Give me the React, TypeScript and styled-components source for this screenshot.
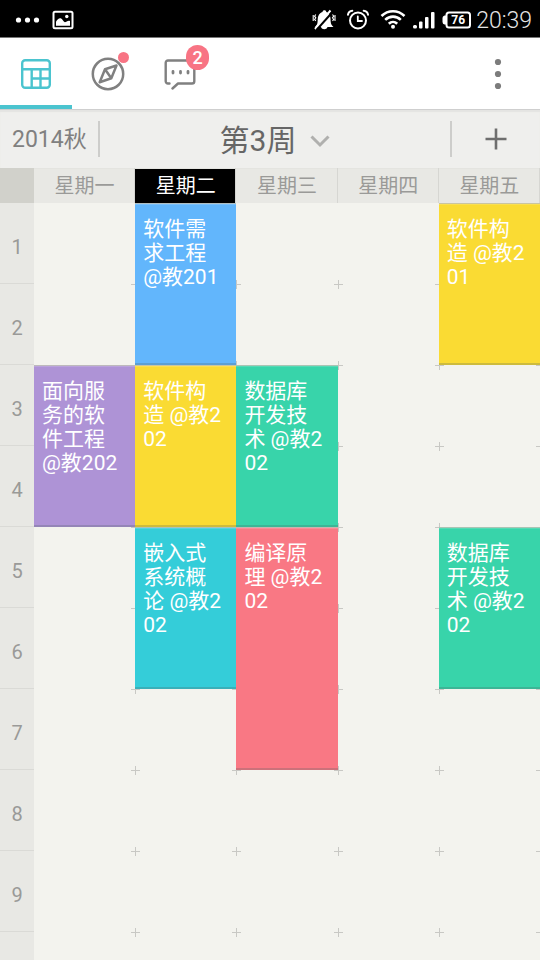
import React from "react";
import styled, { createGlobalStyle } from "styled-components";

const Global = createGlobalStyle`
  *, *::before, *::after { box-sizing: border-box; }
  body {
    margin: 0;
    background: #f3f3ee;
    font-family: Roboto, "Noto Sans CJK SC", sans-serif;
    font-weight: 400;
  }
  button { font: inherit; color: inherit; border: 0; padding: 0; background: none; cursor: pointer; }
  svg { display: block; flex: none; }
`;

const ROW = 81;

const Screen = styled.div`
  height: 100vh;
  display: flex;
  flex-direction: column;
  overflow: hidden;
`;

const StatusBar = styled.div`
  display: flex;
  justify-content: space-between;
  align-items: center;
  flex: none;
  height: 38px;
  padding: 2px 8px 0 14px;
  background: #000;
  border-bottom: 1px solid #777;
  color: #e6e6e6;
`;

const StatusGroup = styled.div<{ $gap: number }>`
  display: flex;
  align-items: center;
  gap: ${(p) => p.$gap}px;
`;

const Clock = styled.time`
  margin-left: -7px;
  padding-top: 2px;
  font-size: 23px;
  font-weight: 300;
  line-height: 28px;
`;

const TabBar = styled.nav`
  display: flex;
  flex: none;
  height: 72px;
  background: #fff;
  border-bottom: 1px solid #cfcfcf;
  color: #808080;
`;

const Tab = styled.button<{ $active?: boolean }>`
  position: relative;
  display: flex;
  align-items: center;
  justify-content: center;
  width: 72px;
  color: ${(p) => (p.$active ? "#4bc4cf" : "#808080")};
  box-shadow: ${(p) => (p.$active ? "inset 0 -4px #4bc4cf" : "none")};
`;

const Dot = styled.span`
  position: absolute;
  top: 14px;
  right: 15px;
  width: 11px;
  height: 11px;
  border-radius: 50%;
  background: #f87484;
`;

const Badge = styled.span`
  position: absolute;
  top: 7px;
  right: 7px;
  width: 23px;
  height: 25px;
  border-radius: 12px;
  background: #f87484;
  color: #fff;
  font-size: 18px;
  font-weight: 500;
  line-height: 26px;
  text-align: center;
`;

const MenuButton = styled.button`
  display: flex;
  align-items: center;
  justify-content: center;
  width: 84px;
  margin-left: auto;
`;

const Toolbar = styled.div`
  display: flex;
  align-items: center;
  flex: none;
  height: 58px;
  background: #efefed;
  box-shadow: inset 0 2px 1px #e4e4e2;
  color: #666;
`;

const Term = styled.button`
  width: 100px;
  height: 36px;
  padding: 2px 0 0 12px;
  border-right: 2px solid #cdcdcb;
  color: #808080;
  font-size: 23px;
  line-height: 34px;
  text-align: left;
  white-space: nowrap;
`;

const Week = styled.button`
  display: flex;
  align-items: center;
  justify-content: center;
  gap: 14px;
  flex: 1;
  padding-top: 3px;
  font-size: 30px;
  line-height: 40px;
`;

const AddButton = styled.button`
  display: flex;
  align-items: center;
  justify-content: center;
  width: 90px;
  height: 36px;
  border-left: 2px solid #cdcdcb;
`;

const Scroller = styled.main`
  flex: 1;
  min-height: 0;
  overflow: hidden auto;
  scrollbar-width: none;
`;

const Timetable = styled.table`
  width: 100%;
  table-layout: fixed;
  border-collapse: collapse;
`;

const Corner = styled.td`
  width: 34px;
  padding: 0;
  background: #d1d1cb;
`;

const DayHead = styled.th<{ $today: boolean }>`
  height: 35px;
  padding: 0;
  background: ${(p) => (p.$today ? "#000" : "#e8e8e4")};
  color: ${(p) => (p.$today ? "#fff" : "#9a9a98")};
  box-shadow: inset -1px 0 #d6d6d2, inset 0 1px #e4e4e0;
  font-size: 20px;
  font-weight: 400;
  line-height: 30px;
  text-align: center;
`;

const PeriodHead = styled.th`
  height: ${ROW}px;
  padding: 6px 0 0;
  background: #e8e8e4;
  box-shadow: inset 0 -1px #dadad6;
  color: #9a9a98;
  font-size: 20px;
  font-weight: 400;
  line-height: 24px;
  text-align: center;
`;

const Cell = styled.td<{ $span: number }>`
  position: relative;
  height: ${(p) => p.$span * ROW}px;
  padding: 0;
  vertical-align: top;
`;

/* Small plus mark on the lower right corner of every period. */
const Mark = styled.i<{ $row: number }>`
  position: absolute;
  z-index: 1;
  top: ${(p) => p.$row * ROW - 4}px;
  right: -5px;
  width: 9px;
  height: 9px;
  background:
    linear-gradient(#c8c8c4, #c8c8c4) center / 9px 1px no-repeat,
    linear-gradient(#c8c8c4, #c8c8c4) center / 1px 9px no-repeat;
`;

const Course = styled.div<{ $color: string }>`
  position: relative;
  z-index: 2;
  height: 100%;
  padding: 14px 10px 0 8px;
  background: ${(p) => p.$color};
  box-shadow: inset 0 1px rgba(190, 190, 180, 0.8), inset 0 2px rgba(255, 255, 255, 0.15),
    inset 0 -2px rgba(70, 90, 90, 0.25);
  color: #fff;
  font-size: 21px;
  line-height: 24px;
  word-break: break-all;
`;

const StatusDots = () => (
  <svg width="26" height="20" viewBox="0 0 26 20" fill="#fff">
    <circle cx="4.5" cy="10" r="2.6" />
    <circle cx="13.5" cy="10" r="2.6" />
    <circle cx="22.5" cy="10" r="2.6" />
  </svg>
);

const PictureIcon = () => (
  <svg width="22" height="20" viewBox="0 0 22 20">
    <rect x="1.5" y="1.8" width="19" height="16.4" rx="1.5" fill="none" stroke="#fff" strokeWidth="2" />
    <path d="M4 15.8v-4c1.5-2.8 3.5-4.2 5.2-3.2 1.3.8 2 2.9 3.3 3.5 1.7.3 3-2 5.5-1.2v4.9z" fill="#fff" />
    <circle cx="14.8" cy="6.5" r="1.7" fill="#fff" />
  </svg>
);

const MutedBell = () => (
  <svg width="24" height="22" viewBox="0 0 24 22" fill="none">
    <path d="M3 18C6 15.5 5.500 13 5.800 9.500 6.200 5.500 8.500 3.600 10.500 3c0-2.400 3.800-2.400 3.800 0 2.200.7 4 2.600 4.200 6.500.2 3.500 0 6 3 8.500z" fill="#fff" />
    <path d="M9 18h6.500c-.8 3-5.700 3-6.500 0z" fill="#fff" />
    <path d="M3 20 18.500 1.500" stroke="#fff" strokeWidth="2" />
    <path d="M4.500 21 21 2.500" stroke="#000" strokeWidth="1.900" />
    <path d="M3.800 5.500 2.600 7.200l1.200 1.600-1.200 1.600L3.800 12M1.200 6v6M20.500 5.500l1.200 1.700-1.200 1.600 1.200 1.600-1.200 1.600M23 6v6" stroke="#fff" strokeWidth="1.100" />
  </svg>
);

const AlarmIcon = () => (
  <svg width="22" height="22" viewBox="0 0 22 22" fill="none" stroke="#fff" strokeLinecap="round">
    <circle cx="11" cy="11.5" r="8" strokeWidth="2" />
    <path d="M10.800 7.500V12H15" strokeWidth="1.800" />
    <path d="M1 5.700C1.300 3.300 3 1.900 5.300 1.700M21 5.700c-.3-2.400-2-3.800-4.300-4" strokeWidth="2" />
  </svg>
);

const WifiIcon = () => (
  <svg width="26" height="22" viewBox="0 0 26 22" fill="none" stroke="#fff" strokeWidth="2.6">
    <path d="M1.500 7c6.500-6.400 16.500-6.400 23 0M5.200 10.900c4.400-4.300 11.200-4.300 15.600 0M8.800 14.700c2.400-2.300 6-2.300 8.400 0" />
    <circle cx="13" cy="17.700" r="2" fill="#fff" stroke="none" />
  </svg>
);

const SignalIcon = () => (
  <svg width="24" height="20" viewBox="0 0 24 20" fill="#fff">
    <rect x="1" y="15" width="4" height="3.5" rx="1.5" />
    <rect x="7" y="11.5" width="3.5" height="7" rx="1" />
    <rect x="13" y="7" width="3.5" height="11.5" rx="1" />
    <rect x="19" y="2" width="3.5" height="16.5" rx="1" />
  </svg>
);

const BatteryIcon = () => (
  <svg width="30" height="18" viewBox="0 0 30 18">
    <rect x="4.5" y="1.5" width="23.5" height="15" rx="2.5" fill="none" stroke="#fff" strokeWidth="2" />
    <path d="M4 4.500H2.500Q.5 5 .5 7v4q0 2 2 2.500H4z" fill="#fff" />
    <text x="16.200" y="13" textAnchor="middle" fontSize="12" fontWeight="700" fontFamily="Roboto, sans-serif" fill="#fff">76</text>
  </svg>
);

const TableIcon = () => (
  <svg width="32" height="32" viewBox="0 0 32 32" fill="none" stroke="currentColor" strokeWidth="2.4">
    <rect x="2.2" y="2.2" width="27.6" height="27.6" rx="3" />
    <path d="M2 11.200h28M11.700 11.200V30M20.500 11.200V30M11.700 20.500H30" />
  </svg>
);

const CompassIcon = () => (
  <svg width="34" height="34" viewBox="0 0 34 34" fill="none" stroke="currentColor" strokeWidth="2.5" strokeLinejoin="round">
    <circle cx="17" cy="17" r="15.2" />
    <path d="M25.500 8.500 14 12.300 8.700 25.300 20.300 21.300zM14 12.300l6.300 9" />
  </svg>
);

const ChatIcon = () => (
  <svg width="34" height="32" viewBox="0 0 34 32" fill="none" stroke="currentColor" strokeWidth="2.4" strokeLinecap="round" strokeLinejoin="round">
    <path d="M6.500 25.500H5A2.300 2.300 0 0 1 2.700 23.200V4.800A2.300 2.300 0 0 1 5 2.500h24a2.300 2.300 0 0 1 2.300 2.300v18.400a2.300 2.300 0 0 1-2.300 2.300H15L9.500 30.500" />
    <path d="M10 13.500v1.500M17.500 13.500v1.500M25 13.500v1.500" strokeWidth="2.8" />
  </svg>
);

const MoreIcon = () => (
  <svg width="8" height="32" viewBox="0 0 8 32" fill="#7c7c7c">
    <circle cx="4" cy="4" r="3.1" />
    <circle cx="4" cy="16" r="3.1" />
    <circle cx="4" cy="28" r="3.1" />
  </svg>
);

const ChevronIcon = () => (
  <svg width="20" height="14" viewBox="0 0 20 14" fill="none" stroke="#b0b0ae" strokeWidth="3">
    <path d="M1.500 2.500 10 11l8.500-8.500" />
  </svg>
);

const PlusIcon = () => (
  <svg width="22" height="22" viewBox="0 0 22 22" stroke="#6e6e6e" strokeWidth="2.6">
    <path d="M11 .5v21M.5 11h21" />
  </svg>
);

const days = ["星期一", "星期二", "星期三", "星期四", "星期五"];
const today = 1;
const periods = [1, 2, 3, 4, 5, 6, 7, 8, 9];

interface Lesson {
  day: number;
  start: number;
  span: number;
  name: string;
  color: string;
}

const lessons: Lesson[] = [
  { day: 1, start: 1, span: 2, name: "软件需求工程 @教201", color: "#62b6fc" },
  { day: 4, start: 1, span: 2, name: "软件构造 @教201", color: "#fadb33" },
  { day: 0, start: 3, span: 2, name: "面向服务的软件工程 @教202", color: "#ae93d6" },
  { day: 1, start: 3, span: 2, name: "软件构造 @教202", color: "#fadb33" },
  { day: 2, start: 3, span: 2, name: "数据库开发技术 @教202", color: "#38d4aa" },
  { day: 1, start: 5, span: 2, name: "嵌入式系统概论 @教202", color: "#34cdd9" },
  { day: 2, start: 5, span: 3, name: "编译原理 @教202", color: "#f97884" },
  { day: 4, start: 5, span: 2, name: "数据库开发技术 @教202", color: "#38d4aa" },
];

function Slot({ day, period }: { day: number; period: number }) {
  const lesson = lessons.find(
    (l) => l.day === day && period >= l.start && period < l.start + l.span
  );
  if (lesson && lesson.start !== period) return null;
  const span = lesson ? lesson.span : 1;
  return (
    <Cell rowSpan={span} $span={span}>
      {lesson && <Course $color={lesson.color}>{lesson.name}</Course>}
      {Array.from({ length: span }, (_, i) => (
        <Mark key={i} $row={i + 1} />
      ))}
    </Cell>
  );
}

export default function App() {
  return (
    <Screen>
      <Global />
      <StatusBar>
        <StatusGroup $gap={12}>
          <StatusDots />
          <PictureIcon />
        </StatusGroup>
        <StatusGroup $gap={11}>
          <MutedBell />
          <AlarmIcon />
          <StatusGroup $gap={6}>
            <WifiIcon />
            <SignalIcon />
            <BatteryIcon />
          </StatusGroup>
          <Clock>20:39</Clock>
        </StatusGroup>
      </StatusBar>
      <TabBar>
        <Tab $active aria-label="课程表">
          <TableIcon />
        </Tab>
        <Tab aria-label="发现">
          <CompassIcon />
          <Dot />
        </Tab>
        <Tab aria-label="消息">
          <ChatIcon />
          <Badge>2</Badge>
        </Tab>
        <MenuButton aria-label="更多">
          <MoreIcon />
        </MenuButton>
      </TabBar>
      <Toolbar>
        <Term>2014秋</Term>
        <Week>
          第3周
          <ChevronIcon />
        </Week>
        <AddButton aria-label="添加">
          <PlusIcon />
        </AddButton>
      </Toolbar>
      <Scroller>
        <Timetable>
          <thead>
            <tr>
              <Corner />
              {days.map((d, i) => (
                <DayHead key={d} scope="col" $today={i === today}>
                  {d}
                </DayHead>
              ))}
            </tr>
          </thead>
          <tbody>
            {periods.map((p) => (
              <tr key={p}>
                <PeriodHead scope="row">{p}</PeriodHead>
                {days.map((d, i) => (
                  <Slot key={d} day={i} period={p} />
                ))}
              </tr>
            ))}
            <tr>
              <PeriodHead as="td" />
              <Cell colSpan={days.length} $span={1} />
            </tr>
          </tbody>
        </Timetable>
      </Scroller>
    </Screen>
  );
}
